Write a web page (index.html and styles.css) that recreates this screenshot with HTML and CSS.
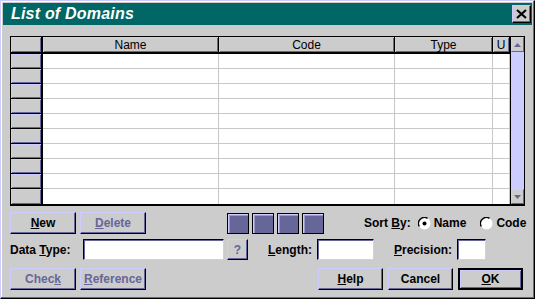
FILE: index.html
```html
<!DOCTYPE html>
<html>
<head>
<meta charset="utf-8">
<link rel="stylesheet" href="styles.css">
</head>
<body>
<div class="window">
  <div class="titlebar">
    <span class="title">List of Domains</span>
    <div class="close">
      <svg width="11" height="10" viewBox="0 0 11 10"><path d="M1 1 L10 9 M10 1 L1 9" stroke="#000" stroke-width="2.2" fill="none"/></svg>
    </div>
  </div>
  <div class="content">
    <div class="grid">
      <div class="table">
        <div class="hcell sel"></div>
        <div class="hcell">Name</div>
        <div class="hcell">Code</div>
        <div class="hcell">Type</div>
        <div class="hcell">U</div>

        <div class="rsel"></div><div class="cell"></div><div class="cell"></div><div class="cell"></div><div class="cell"></div>
        <div class="rsel"></div><div class="cell"></div><div class="cell"></div><div class="cell"></div><div class="cell"></div>
        <div class="rsel"></div><div class="cell"></div><div class="cell"></div><div class="cell"></div><div class="cell"></div>
        <div class="rsel"></div><div class="cell"></div><div class="cell"></div><div class="cell"></div><div class="cell"></div>
        <div class="rsel"></div><div class="cell"></div><div class="cell"></div><div class="cell"></div><div class="cell"></div>
        <div class="rsel"></div><div class="cell"></div><div class="cell"></div><div class="cell"></div><div class="cell"></div>
        <div class="rsel"></div><div class="cell"></div><div class="cell"></div><div class="cell"></div><div class="cell"></div>
        <div class="rsel"></div><div class="cell"></div><div class="cell"></div><div class="cell"></div><div class="cell"></div>
        <div class="rsel"></div><div class="cell"></div><div class="cell"></div><div class="cell"></div><div class="cell"></div>
        <div class="rsel last"></div><div class="cell last"></div><div class="cell last"></div><div class="cell last"></div><div class="cell last"></div>
      </div>
      <div class="scrollbar">
        <div class="sbtn"><svg width="7" height="4" viewBox="0 0 7 4"><path d="M3.5 0 L7 4 L0 4 Z" fill="#666699"/></svg></div>
        <div class="track"></div>
        <div class="sbtn"><svg width="7" height="4" viewBox="0 0 7 4"><path d="M0 0 L7 0 L3.5 4 Z" fill="#666699"/></svg></div>
      </div>
    </div>

    <div class="row row1">
      <div class="btn"><u>N</u>ew</div>
      <div class="btn disabled gap4"><u>D</u>elete</div>
      <div class="squares">
        <div class="sq"></div><div class="sq"></div><div class="sq"></div><div class="sq"></div>
      </div>
      <div class="sortby">Sort <u>B</u>y:</div>
      <div class="radio">
        <svg width="13" height="13" viewBox="0 0 13 13"><circle cx="6.5" cy="6.5" r="6" fill="#fff"/><path d="M1.3 9.5 A6 6 0 0 1 9.5 1.3" stroke="#000" stroke-width="1.4" fill="none"/><circle cx="6.5" cy="6.5" r="2" fill="#000"/></svg>
        <span>Name</span>
      </div>
      <div class="radio r2">
        <svg width="13" height="13" viewBox="0 0 13 13"><circle cx="6.5" cy="6.5" r="6" fill="#fff"/><path d="M1.3 9.5 A6 6 0 0 1 9.5 1.3" stroke="#000" stroke-width="1.4" fill="none"/></svg>
        <span>Code</span>
      </div>
    </div>

    <div class="row row2">
      <div class="lbl l1">Data <u>T</u>ype:</div>
      <div class="input i1"></div>
      <div class="btn qbtn disabled">?</div>
      <div class="lbl l2"><u>L</u>ength:</div>
      <div class="input i2"></div>
      <div class="lbl l3"><u>P</u>recision:</div>
      <div class="input i3"></div>
    </div>

    <div class="row row3">
      <div class="btn disabled">Chec<u>k</u></div>
      <div class="btn disabled gap4"><u>R</u>eference</div>
      <div class="btn help"><u>H</u>elp</div>
      <div class="btn gap5">Cancel</div>
      <div class="btn ok gap5"><u>O</u>K</div>
    </div>
  </div>
</div>
</body>
</html>
```

FILE: styles.css
```css
html, body {
  margin: 0;
  padding: 0;
  background: #cccccc;
}
.window {
  width: 535px;
  height: 299px;
  box-sizing: border-box;
  background: #cccccc;
  border: 1px solid;
  border-color: #ccccff #000 #000 #ccccff;
  box-shadow: inset -1px -1px #666699, inset 1px 1px #ffffff;
  padding: 2px;
  font-family: "Liberation Sans", Arial, sans-serif;
  font-size: 12px;
  color: #000;
}
.titlebar {
  height: 22px;
  background: #006666;
  display: flex;
  align-items: center;
  padding-left: 8px;
}
.title {
  color: #fff;
  font-weight: bold;
  font-style: italic;
  font-size: 16px;
  letter-spacing: 0.2px;
}
.close {
  margin-left: auto;
  margin-right: 1px;
  width: 19px;
  height: 18px;
  box-sizing: border-box;
  background: #cccccc;
  border: 1px solid;
  border-color: #ccccff #000 #000 #ccccff;
  box-shadow: inset -1px -1px #666699;
  display: flex;
  align-items: center;
  justify-content: center;
}
.content {
  padding: 11px 0 0 7px;
}
.grid {
  width: 515px;
  box-sizing: border-box;
  border: 1px solid #000;
  border-bottom-width: 2px;
  display: flex;
  background: #fff;
}
.table {
  display: grid;
  grid-template-columns: 32px 176px 176px 98px 17px;
  grid-template-rows: 17px repeat(10, 15px);
}
.hcell {
  background: #cccccc;
  border-right: 1px solid #000;
  border-bottom: 2px solid #000;
  box-shadow: inset 1px 1px #ccccff, inset -1px -1px #666699;
  display: flex;
  align-items: center;
  justify-content: center;
  font-size: 12px;
  line-height: 1;
}
.hcell.sel {
  border-right: 2px solid #000;
}
.rsel {
  background: #cccccc;
  border-right: 2px solid #000;
  border-bottom: 1px solid #000;
  box-shadow: inset 1px 1px #ccccff, inset -1px -1px #666699;
}
.cell {
  background: #fff;
  border-right: 1px solid #c8c8c8;
  border-bottom: 1px solid #c8c8c8;
}
.rsel.last, .cell.last {
  border-bottom: none;
}
.scrollbar {
  width: 14px;
  display: flex;
  flex-direction: column;
  background: #ccccff;
  border-left: 1px solid #000;
}
.sbtn {
  height: 15px;
  background: #cccccc;
  box-sizing: border-box;
  border: 1px solid;
  border-color: #ccccff #666699 #666699 #ccccff;
  display: flex;
  align-items: center;
  justify-content: center;
}
.track {
  flex: 1;
  background: #ccccff;
}
.row {
  display: flex;
  align-items: center;
}
.row1 {
  margin-top: 6px;
  height: 22px;
}
.row2 {
  margin-top: 5px;
  height: 21px;
}
.row3 {
  margin-top: 8px;
  height: 22px;
}
.btn {
  width: 66px;
  height: 22px;
  box-sizing: border-box;
  background: #cccccc;
  border: 1px solid;
  border-color: #ccccff #000 #000 #ccccff;
  box-shadow: inset -1px -1px #666699;
  display: flex;
  align-items: center;
  justify-content: center;
  font-weight: bold;
  font-size: 12px;
}
.btn.disabled {
  color: #666699;
}
.gap4 { margin-left: 4px; }
.gap5 { margin-left: 5px; }
.btn.help {
  margin-left: 172px;
  width: 65px;
}
.btn.gap5 { width: 65px; }
.btn.ok {
  border: 2px solid #000;
  box-shadow: inset 1px 1px #ccccff, inset -1px -1px #666699;
}
.squares {
  display: flex;
  gap: 3px;
  margin-left: 81px;
}
.sq {
  width: 22px;
  height: 21px;
  box-sizing: border-box;
  background: #666699;
  border: 1px solid #000;
  box-shadow: inset 1px 1px #ccccff, inset 2px 2px #9999cc;
}
.sortby {
  margin-left: 40px;
  font-weight: bold;
}
.radio {
  display: flex;
  align-items: center;
  gap: 3px;
  font-weight: bold;
  margin-left: 7px;
}
.radio.r2 {
  margin-left: 14px;
}
.lbl {
  font-weight: bold;
  white-space: nowrap;
}
.l1 { width: 73px; }
.l2 { width: 49px; margin-left: 20px; }
.l3 { width: 63px; margin-left: 20px; }
.input {
  height: 21px;
  box-sizing: border-box;
  background: #fff;
  border: 1px solid;
  border-color: #000 #ccccff #ccccff #000;
  box-shadow: inset 1px 1px #666699;
}
.i1 { width: 141px; }
.i2 { width: 57px; }
.i3 { width: 29px; }
.btn.qbtn {
  width: 21px;
  height: 21px;
  margin-left: 3px;
}
```
